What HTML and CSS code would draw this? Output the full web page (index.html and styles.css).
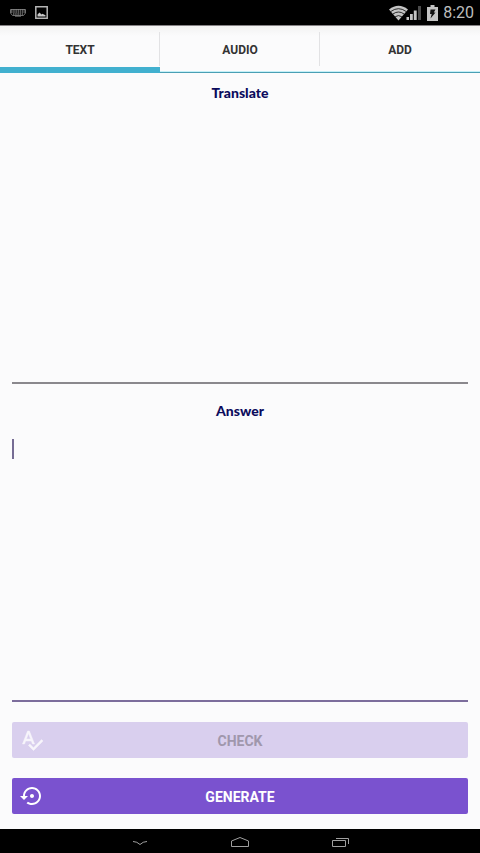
FILE: index.html
```
<!DOCTYPE html>
<html lang="en">

<head>
    <meta charset="UTF-8">
    <meta name="viewport" content="width=device-width, initial-scale=1.0">
    <title>Translate</title>
    <link rel="stylesheet" href="styles.css">
</head>

<body>
    <!-- Status bar -->
    <header class="status-bar">
        <div class="status-group">
            <svg width="16" height="8" viewBox="0 0 16 8" aria-hidden="true">
                <path d="M1 1h14M1 3h14M3 5h10" stroke="#b0b0b0" stroke-width="1.2" stroke-dasharray="1.5 .7" fill="none" />
                <path d="M.5.5h15V4l-2 2.500h-11L.5 4zM5 7.200h6" stroke="#8c8c8c" stroke-width=".8" fill="none" />
            </svg>
            <svg width="13" height="13" viewBox="0 0 13 13" aria-hidden="true">
                <path d="M.8.8h11.400v11.400H.8z" fill="none" stroke="#b5b5b5" stroke-width="1.5" />
                <path d="M2.500 10.500V8.500L4.500 6.500l2 2 1-.8 3 1.500v1.300z" fill="#c8c8c8" />
            </svg>
        </div>
        <div class="status-group status-right">
            <svg width="33" height="16" viewBox="0 0 33 16" aria-hidden="true">
                <path d="M0 4.500Q9.500-3 19 4.500L9.500 15.500z" fill="#c4c4c4" />
                <path d="M1.800 6.500q7.700-5.600 15.400 0M3.900 9q5.600-4 11.200 0M6.200 11.700q3.300-2.200 6.600 0" fill="none" stroke="#000" stroke-width=".8" />
                <path d="M17.500 15v-3H20v3zM21 15V9h2.800v6zM24.800 15V5.500h2.900V15z" fill="#c4c4c4" />
                <path d="M29 15V1h3v14z" fill="#4b4b4b" />
            </svg>
            <svg width="11" height="16" viewBox="0 0 11 16" aria-hidden="true">
                <path d="M3.500 0h4v2H11v14H0V2h3.500z" fill="#c4c4c4" />
                <path d="M3.500 4.500h5L6.800 7.500H8.500L3.500 13.500l1.200-4.500H3z" fill="#111" />
            </svg>
            <span class="clock">8:20</span>
        </div>
    </header>

    <!-- Tabs -->
    <nav class="tabs">
        <button class="tab active" type="button">TEXT</button>
        <button class="tab" type="button">AUDIO</button>
        <button class="tab" type="button">ADD</button>
    </nav>

    <!-- Content -->
    <main class="content">
        <div class="field">
            <label class="field-title" for="translate">Translate</label>
            <textarea class="field-text" id="translate" readonly></textarea>
        </div>

        <div class="field field-answer">
            <label class="field-title" for="answer">Answer</label>
            <textarea class="field-text" id="answer"></textarea>
        </div>

        <div class="actions">
            <button class="btn" type="button" disabled>
                <svg class="btn-icon" width="24" height="24" viewBox="0 0 24 24" aria-hidden="true">
                    <path d="M12.450 16h2.090L9.430 3H7.570L2.460 16h2.090l1.120-3h5.640l1.140 3zm-6.020-5L8.500 5.480 10.570 11H6.430zm15.160.590l-8.090 8.090L9.830 16l-1.410 1.410 5.090 5.090L23 13l-1.410-1.410z" />
                </svg>
                CHECK
            </button>
            <button class="btn" type="button">
                <svg class="btn-icon" width="24" height="24" viewBox="0 0 24 24" aria-hidden="true">
                    <path d="M14 12c0-1.100-.9-2-2-2s-2 .9-2 2 .9 2 2 2 2-.9 2-2zm-2-9c-4.970 0-9 4.030-9 9H0l4 4 4-4H5c0-3.870 3.130-7 7-7s7 3.130 7 7-3.130 7-7 7c-1.510 0-2.910-.49-4.060-1.300l-1.420 1.440C8.040 20.300 9.940 21 12 21c4.970 0 9-4.030 9-9s-4.030-9-9-9z" />
                </svg>
                GENERATE
            </button>
        </div>
    </main>

    <!-- Navigation bar -->
    <footer class="nav-bar">
        <button class="nav-btn" type="button" aria-label="Back">
            <svg width="20" height="12" viewBox="0 0 20 12"><path d="M3 5.500q4 0 7 3 3-3 7-3" /></svg>
        </button>
        <button class="nav-btn" type="button" aria-label="Home">
            <svg width="20" height="12" viewBox="0 0 20 12"><path d="M1.500 10.500V5L10 1.500 18.500 5v5.500z" /></svg>
        </button>
        <button class="nav-btn" type="button" aria-label="Recent apps">
            <svg width="20" height="12" viewBox="0 0 20 12"><path d="M2.500 4.500h13v6h-13zM6 2.500h12.500V8" /></svg>
        </button>
    </footer>
</body>

</html>
```
FILE: styles.css
```
* {
    box-sizing: border-box;
}

body {
    margin: 0;
    min-height: 100vh;
    display: flex;
    flex-direction: column;
    font-family: Roboto, sans-serif;
    background: #fbfbfc;
    color: #333;
}

button {
    border: none;
    margin: 0;
    padding: 0;
    font-family: inherit;
    cursor: pointer;
}

/* Status bar */
.status-bar {
    height: 26px;
    padding: 0 6px 0 10px;
    display: flex;
    justify-content: space-between;
    align-items: center;
    background: #000;
    border-bottom: 1px solid #858285;
}

.status-group {
    display: flex;
    align-items: center;
    gap: 9px;
}

.status-right {
    gap: 5px;
}

.clock {
    font-size: 16px;
    line-height: 20px;
    color: #bdbdbd;
}

/* Tabs */
.tabs {
    height: 47px;
    display: flex;
    background: linear-gradient(#f2f2f2, #fbfbfc 10px);
}

.tab {
    flex: 1;
    padding-top: 1px;
    font-size: 12px;
    font-weight: bold;
    color: #333;
    background: linear-gradient(#e2e2e4, #e2e2e4) right 6px / 1px 34px no-repeat;
    box-shadow: inset 0 -1px #4a9fb4, inset 0 -2px #c4f0f8;
}

.tab:last-child {
    background: none;
}

.tab.active {
    box-shadow: inset 0 -6px #41b0cf;
}

/* Content */
.content {
    flex: 1;
    display: flex;
    flex-direction: column;
    padding: 10px 12px 15px;
}

.field {
    flex: 1;
    display: flex;
    flex-direction: column;
    position: relative;
}

.field-title {
    font-family: Lato, sans-serif;
    font-size: 14px;
    font-weight: 900;
    line-height: 20px;
    text-align: center;
    color: #0b0b5c;
}

.field-text {
    flex: 1;
    width: 100%;
    min-height: 80px;
    padding: 18px 0 8px;
    border: none;
    border-bottom: 2px solid #8a888d;
    outline: none;
    resize: none;
    background: transparent;
    font-family: inherit;
    font-size: 16px;
    line-height: 20px;
    color: #333;
    caret-color: #766c94;
}

.field-answer {
    margin-top: 17px;
}

.field-answer .field-text {
    border-bottom-color: #7c6d9c;
}

/* Cursor shown until the answer box gets the focus */
.field-answer::after {
    content: "";
    position: absolute;
    top: 38px;
    left: 0;
    width: 2px;
    height: 20px;
    background: #766c94;
}

.field-answer:focus-within::after {
    display: none;
}

/* Buttons */
.actions {
    margin-top: 20px;
    display: flex;
    flex-direction: column;
    gap: 20px;
}

.btn {
    position: relative;
    height: 36px;
    padding-top: 1px;
    border-radius: 2px;
    font-size: 14px;
    font-weight: bold;
    color: #fff;
    background: #7a52cf;
}

.btn:disabled {
    color: #a097ac;
    background: #d9cfee;
    cursor: default;
}

.btn-icon {
    position: absolute;
    top: 6px;
    left: 8px;
    fill: #fff;
}

.btn:disabled .btn-icon {
    stroke: #fff;
    stroke-width: 0.5;
    opacity: 0.8;
}

/* Navigation bar */
.nav-bar {
    height: 24px;
    padding-top: 1px;
    display: flex;
    justify-content: center;
    align-items: center;
    gap: 80px;
    background: #000;
}

.nav-btn {
    display: flex;
    background: none;
}

.nav-btn svg {
    fill: none;
    stroke: #a0a0a0;
    stroke-width: 1;
}
```
